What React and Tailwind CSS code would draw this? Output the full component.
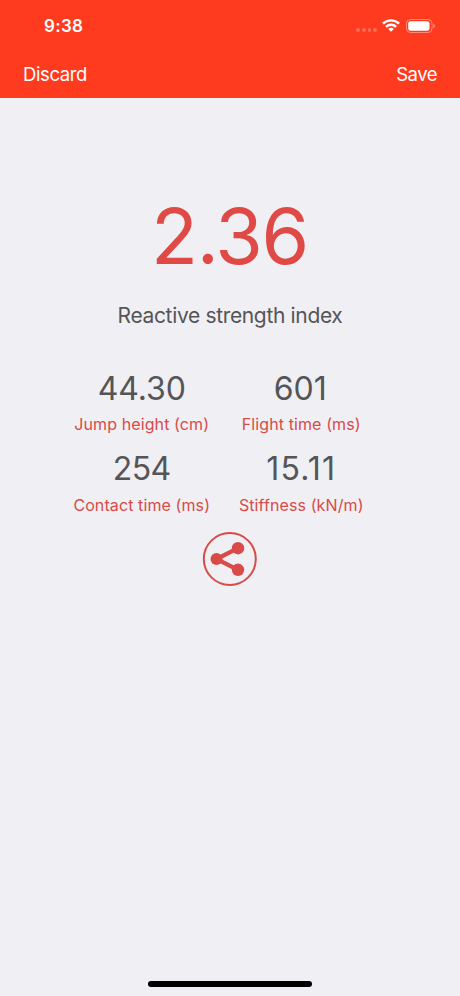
import React from 'react';

const metrics = [
    { value: '44.30', label: 'Jump height (cm)', valueClass: 'tracking-[-0.1px]', labelClass: 'mt-[3px]' },
    { value: '601', label: 'Flight time (ms)', valueClass: 'tracking-[0px] -ml-0.5', labelClass: 'mt-[3px]' },
    { value: '254', label: 'Contact time (ms)', valueClass: 'tracking-[-0.6px]', labelClass: 'mt-1' },
    { value: '15.11', label: 'Stiffness (kN/m)', valueClass: 'tracking-[1.2px]', labelClass: 'mt-1' },
];

const StatusIcons = () => (
    <div className="flex items-center">
        <div className="flex gap-[1.8px] mt-[9px] mr-[5px]">
            {[0, 1, 2, 3].map((dot) => (
                <span key={dot} className="w-[3.8px] h-[3.8px] rounded-full bg-white/25" />
            ))}
        </div>
        <svg width="18" height="13" viewBox="0 0 18 13" fill="none" stroke="white" strokeWidth="2.4">
            <path d="M0.9 4.7a11.6 11.6 0 0 1 16.2 0" />
            <path d="M3.9 7.9a7.3 7.3 0 0 1 10.2 0" />
            <path d="M9 12.8L6.2 10a4 4 0 0 1 5.6 0Z" fill="white" stroke="none" />
        </svg>
        <svg className="ml-[6px]" width="30" height="14" viewBox="0 0 30 14" fill="none">
            <rect x="0.5" y="0.5" width="25.5" height="13" rx="4" stroke="white" strokeOpacity="0.4" />
            <rect x="2.2" y="2.2" width="21.3" height="9.6" rx="2.4" fill="white" />
            <path d="M27.4 4.8v4.4c1-.4 1.5-1.2 1.5-2.2s-.5-1.8-1.5-2.2Z" fill="white" fillOpacity="0.45" />
        </svg>
    </div>
);

const ShareButton = () => (
    <button className="block ml-[202px] mt-[15px]" aria-label="Share">
        <svg width="55" height="55" viewBox="0 0 55 55" fill="none">
            <circle cx="27.8" cy="27" r="26" stroke="#d84b48" strokeWidth="2" />
            <path d="M36 16.2L14.5 27L36 37.8" stroke="#d84b48" strokeWidth="4.2" />
            <circle cx="14.5" cy="27" r="6" fill="#d84b48" />
            <circle cx="36" cy="16.2" r="6.2" fill="#d84b48" />
            <circle cx="36" cy="37.8" r="6.2" fill="#d84b48" />
        </svg>
    </button>
);

const App = () => {
    return (
        <div className="w-[460px] h-[996px] flex flex-col overflow-hidden bg-[#efeff4] font-['Inter',sans-serif]">
            <header className="h-[98px] shrink-0 bg-[#ff3b1f] text-white">
                <div className="h-[51px] pl-[44px] pr-[24px] flex items-center justify-between">
                    <span className="pt-[2px] text-[17px] font-semibold tracking-[0.3px]">9:38</span>
                    <StatusIcons />
                </div>
                <nav className="h-[47px] px-[23px] flex items-center justify-between text-[18.5px]">
                    <button className="tracking-[-0.4px]">Discard</button>
                    <button className="tracking-[-0.5px]">Save</button>
                </nav>
            </header>

            <main className="flex-1 pt-[98px]">
                <h1 className="h-20 pr-px leading-[80px] text-center text-[77px] tracking-[-1.4px] text-[#e04a46]">2.36</h1>
                <p className="mt-[25px] leading-[30px] text-center text-[21px] tracking-[-0.34px] text-[#555557]">
                    Reactive strength index
                </p>

                <div className="mt-[38px] ml-[62px] w-[319px] grid grid-cols-2 gap-y-[13px] text-center">
                    {metrics.map((metric) => (
                        <div key={metric.label}>
                            <div className={`leading-[40px] text-[32px] text-[#555557] ${metric.valueClass}`}>
                                {metric.value}
                            </div>
                            <div className={`leading-6 text-[16px] tracking-[0.1px] text-[#d84b48] whitespace-nowrap ${metric.labelClass}`}>
                                {metric.label}
                            </div>
                        </div>
                    ))}
                </div>

                <ShareButton />
            </main>

            <div className="w-[164px] h-[6px] mb-[9px] mx-auto shrink-0 rounded-full bg-black" />
        </div>
    );
};

export default App;
